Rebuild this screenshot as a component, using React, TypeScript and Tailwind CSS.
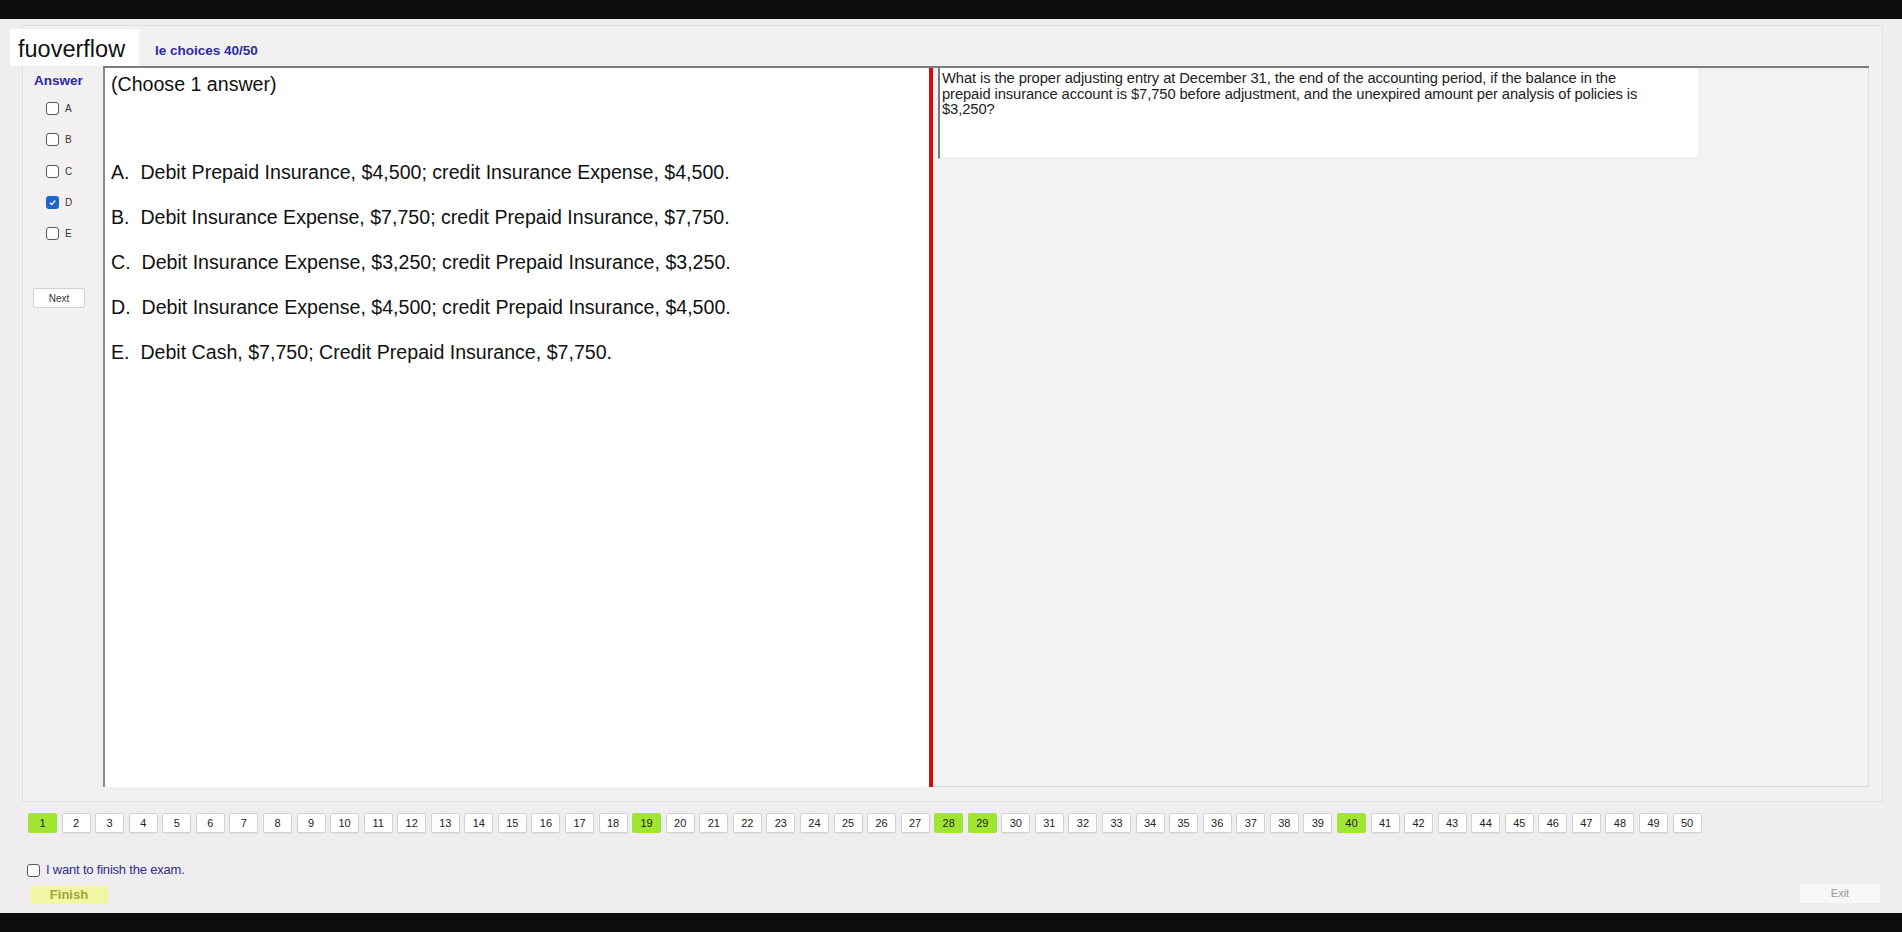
import React from "react";

const greens = new Set([1, 19, 28, 29, 40]);

function Box({ checked = false }: { checked?: boolean }) {
  if (checked) {
    return (
      <span className="w-[13px] h-[13px] rounded-[3px] bg-[#1f66cc] flex items-center justify-center shrink-0">
        <svg width="9" height="9" viewBox="0 0 10 10">
          <path d="M2 5.2 L4.2 7.3 L8 2.8" fill="none" stroke="#ffffff" strokeWidth="1.4" />
        </svg>
      </span>
    );
  }
  return <span className="w-[13px] h-[13px] rounded-[3px] border border-[#5a5a5a] bg-white shrink-0" />;
}

export default function App() {
  const letters = ["A", "B", "C", "D", "E"];
  const options = [
    "A.\u00a0 Debit Prepaid Insurance, $4,500; credit Insurance Expense, $4,500.",
    "B.\u00a0 Debit Insurance Expense, $7,750; credit Prepaid Insurance, $7,750.",
    "C.\u00a0 Debit Insurance Expense, $3,250; credit Prepaid Insurance, $3,250.",
    "D.\u00a0 Debit Insurance Expense, $4,500; credit Prepaid Insurance, $4,500.",
    "E.\u00a0 Debit Cash, $7,750; Credit Prepaid Insurance, $7,750.",
  ];
  const nums = Array.from({ length: 50 }, (_, i) => i + 1);

  return (
    <div className="w-[1902px] h-[932px] flex flex-col bg-[#efedef] relative overflow-hidden font-['Liberation_Sans',Arial,sans-serif] text-[#111]">
      <div className="h-[19px] bg-[#0e0e0e] shrink-0" />

      <div className="flex-1 flex flex-col pl-[22px] pt-[6px]">
        {/* frame */}
        <div className="w-[1861px] h-[777px] border border-[#e2e0e2] bg-[#f2f0f1] flex flex-col shrink-0">
          <div className="h-[40px] flex items-center pt-[10px] pl-[132px] shrink-0">
            <span className="text-[13.5px] font-bold text-[#2a2aa6]">le choices 40/50</span>
          </div>
          <div className="flex">
            {/* answer column */}
            <div className="w-[80px] flex flex-col shrink-0">
              <div className="pt-[7px] pl-[11px] leading-[16px] text-[13.5px] font-bold text-[#2a2aa6]">Answer</div>
              <div className="mt-[4px] flex flex-col">
                {letters.map((l) => (
                  <div key={l} className="h-[31.25px] flex items-center pl-[23px] gap-[6px]">
                    <Box checked={l === "D"} />
                    <span className="text-[10px] text-[#333]">{l}</span>
                  </div>
                ))}
              </div>
              <div className="mt-[39px] ml-[10px] w-[52px] h-[20px] border border-[#d0d0d0] rounded-[2px] bg-white flex items-center justify-center text-[10px] text-[#333]">
                Next
              </div>
            </div>
            {/* main box */}
            <div className="w-[1766px] h-[721px] border-t-2 border-[#7c7c7c] flex shrink-0">
              <div className="w-[826px] h-full bg-white border-l-2 border-[#8a8a8a] pl-[6px] flex flex-col shrink-0">
                <div className="pt-[5px] leading-[22px] text-[19.6px]">(Choose 1 answer)</div>
                <div className="mt-[66px] flex flex-col gap-[23px]">
                  {options.map((o) => (
                    <div key={o} className="leading-[22px] text-[19.6px] whitespace-nowrap">
                      {o}
                    </div>
                  ))}
                </div>
              </div>
              <div className="w-[4px] h-full bg-[#d40c0c] shrink-0" />
              <div className="w-[936px] h-full bg-[#f3f1f2] border-r border-b border-[#dedcde] pl-[5px] shrink-0">
                <div className="w-[760px] h-[91px] bg-white border-l-2 border-[#7a7a7a] border-b border-b-[#e8e6e8] pl-[2px] pt-[3px] text-[14.75px] leading-[15.5px] text-[#222] whitespace-nowrap tracking-[-0.1px]">
                  What is the proper adjusting entry at December 31, the end of the accounting period, if the balance in the
                  <br />
                  prepaid insurance account is $7,750 before adjustment, and the unexpired amount per analysis of policies is
                  <br />
                  $3,250?
                </div>
              </div>
            </div>
          </div>
        </div>

        {/* pagination */}
        <div className="mt-[11px] pl-[6px] flex gap-[4.57px]">
          {nums.map((n) => (
            <div
              key={n}
              className={
                greens.has(n)
                  ? "w-[29px] h-[20px] rounded-[2px] bg-[#a0e532] border border-[#a0e532] flex items-center justify-center text-[11px] text-[#222] shrink-0"
                  : "w-[29px] h-[20px] rounded-[2px] bg-white border border-[#d2d2d2] shadow-[0_1px_1px_rgba(0,0,0,0.06)] flex items-center justify-center text-[11px] text-[#222] shrink-0"
              }
            >
              {n}
            </div>
          ))}
        </div>

        {/* finish area */}
        <div className="mt-[30px] flex items-end justify-between pr-[22px]">
          <div className="flex flex-col pl-[5px]">
            <div className="h-[14px] flex items-center gap-[6px]">
              <Box />
              <span className="text-[13px] text-[#2e2e88] tracking-[-0.2px]">I want to finish the exam.</span>
            </div>
            <div className="mt-[9px] ml-[3px] w-[78px] h-[18px] bg-[#f3f6a4] flex items-center justify-center text-[13px] font-bold text-[#a3a43a]">
              Finish
            </div>
          </div>
          <div className="mb-[1px] w-[80px] h-[19px] bg-[#f8f6f8] flex items-center justify-center text-[11px] text-[#9a9a9a]">
            Exit
          </div>
        </div>
      </div>

      <div className="h-[19px] bg-[#0e0e0e] shrink-0" />

      {/* watermark overlay */}
      <div className="absolute left-[10px] top-[29px] w-[129px] h-[37px] bg-white pl-[8px] pt-[4px] flex items-center text-[23.5px] text-[#111]">
        fuoverflow
      </div>
    </div>
  );
}
